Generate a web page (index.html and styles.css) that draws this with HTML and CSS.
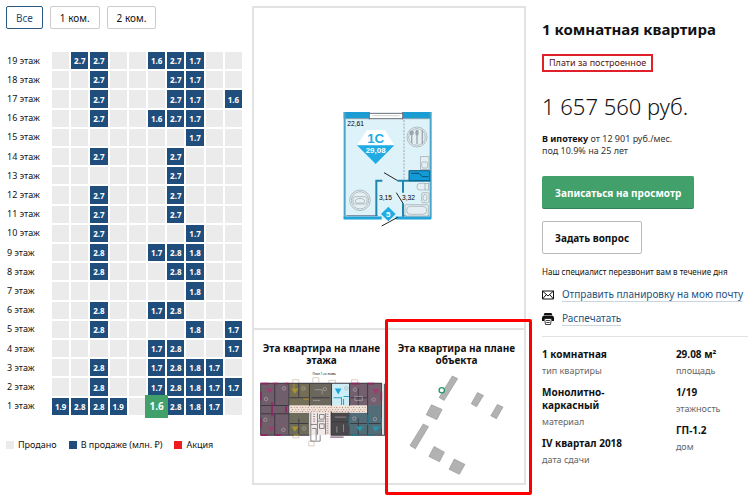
FILE: index.html
```html
<!DOCTYPE html>
<html lang="ru">
<head>
  <meta charset="UTF-8">
  <meta name="viewport" content="width=device-width, initial-scale=1.0">
  <title>1 комнатная квартира</title>
  <link rel="stylesheet" href="styles.css">
</head>
<body>
  <main class="page">
    <section class="floors">
      <div class="filters">
        <button type="button" class="filter active">Все</button>
        <button type="button" class="filter">1 ком.</button>
        <button type="button" class="filter">2 ком.</button>
      </div>
      <table class="chess">
        <tbody id="chess"></tbody>
      </table>
      <ul class="legend">
        <li class="sold">Продано</li>
        <li class="sale">В продаже (млн. ₽)</li>
        <li class="promo">Акция</li>
      </ul>
    </section>

    <section class="plans">
      <div class="plan-main">
        <svg class="flat" viewBox="0 0 360 390">
          <rect x="44" y="38" width="262" height="320" fill="#def2fa"/>
          <path d="M44 46H306" stroke="#1b9cd3" stroke-width="20"/>
          <path d="M52 56H298" stroke="#8fa3ad" stroke-width="3"/>
          <rect x="120" y="34" width="102" height="24" fill="#fff"/>
          <path d="M120 40H222M120 56H222M121 36V58M221 36V58" stroke="#66707a" stroke-width="3"/>
          <path d="M130 47H212" stroke="#bbb" stroke-width="2"/>
          <path d="M47 36V356M305 36V356" stroke="#4aa5c9" stroke-width="6"/>
          <path d="M44 354H158M200 354H306" stroke="#1fa5da" stroke-width="9"/>
          <path d="M52 347H146M222 347H300" stroke="#446" stroke-width="2"/>
          <path d="M142 348V242H160M222 350V310M222 278V242H304M206 242H222" fill="none" stroke="#2186ae" stroke-width="6"/>
          <path d="M225 60V240" stroke="#9aa7ad" stroke-width="3" stroke-dasharray="6 4"/>
          <path d="M240 242V212H302V242Z" fill="#139bd8" stroke="#115c80" stroke-width="3"/>
          <path d="M246 220H270L280 230H298" fill="none" stroke="#0d5173" stroke-width="3"/>
          <path d="M165 218L206 242M202 278L222 310M158 378L206 352" stroke="#222" stroke-width="3"/>
          <path d="M84 136L114 90H168L196 136Z" fill="#fff"/>
          <path d="M84 136H196L140 192Z" fill="#20ace3"/>
          <path d="M156 342L178 320L200 342L178 364Z" fill="#20ace3"/>
          <g fill="#e4eff3" stroke="#9aa6ab" stroke-width="2">
            <circle cx="264" cy="111" r="30"/>
            <circle cx="264" cy="111" r="25"/>
            <circle cx="93" cy="301" r="31"/>
            <circle cx="93" cy="301" r="26"/>
            <rect x="72" y="290" width="42" height="22" rx="6"/>
            <path d="M78 302Q93 288 108 302L104 309H82Z"/>
            <rect x="274" y="170" width="26" height="38"/>
            <rect x="278" y="186" width="18" height="18" rx="4"/>
            <rect x="278" y="278" width="22" height="30" rx="4"/>
            <ellipse cx="288" cy="293" rx="6" ry="10"/>
            <rect x="264" y="250" width="28" height="20" rx="9"/>
            <rect x="288" y="250" width="11" height="20"/>
            <rect x="228" y="314" width="70" height="34" rx="3"/>
            <rect x="233" y="319" width="60" height="24" rx="11"/>
          </g>
          <path d="M244 92V102Q248 108 252 102V92M248 92V130M264 106V132M280 90V132" fill="none" stroke="#9aa6ab" stroke-width="4"/>
          <ellipse cx="264" cy="98" rx="5" ry="9" fill="#9aa6ab"/>
          <g class="flat-label">
            <text x="55" y="78">22,61</text>
            <text x="150" y="300">3,15</text>
            <text x="219" y="300">3,32</text>
          </g>
          <text class="flat-type" x="140" y="128">1С</text>
          <text class="flat-area" x="140" y="159">29,08</text>
          <text class="flat-area" x="178" y="350">5</text>
        </svg>
      </div>
      <div class="plan-small">
        <h2>Эта квартира на плане этажа</h2>
        <svg class="floor-plan" viewBox="20 185 380 235">
          <text class="tiny" x="218" y="200">План 1-го этажа</text>
          <g fill="none" stroke="#c9b9ad" stroke-width="2">
            <path d="M124 224V214H142V224M184 222V208H202V222M232 224V216H252V224M300 224V214H318V224M124 380V388H142V380M172 398H188V412H172Z"/>
            <path d="M236 386H276" stroke="#a8899c" stroke-width="5"/>
          </g>
          <rect x="28" y="224" width="84" height="156" fill="#705e6a"/>
          <rect x="112" y="224" width="62" height="68" fill="#756e57"/>
          <rect x="174" y="224" width="66" height="68" fill="#6b675c"/>
          <rect x="240" y="224" width="54" height="68" fill="#ccecf6"/>
          <rect x="294" y="224" width="96" height="68" fill="#735f6d"/>
          <rect x="112" y="312" width="62" height="68" fill="#6e6d5b"/>
          <rect x="174" y="310" width="66" height="70" fill="#f0eaea"/>
          <rect x="240" y="310" width="52" height="70" fill="#4a484b"/>
          <rect x="292" y="312" width="98" height="68" fill="#536d78"/>
          <rect x="348" y="290" width="42" height="26" fill="#536d78"/>
          <rect x="112" y="291" width="236" height="22" fill="#f2e3d9"/>
          <path d="M118 297H344M122 304H344M118 309H340" stroke="#a98078" stroke-width="3" stroke-dasharray="3 7 2 5"/>
          <path d="M28 225H390M28 380H174M238 380H400M70 225V290M70 316V380M28 291H112M28 316H112M112 225V380M142 226V268M142 330V380M174 226V292M240 226V292M294 226V292M348 226V380M320 240V290M390 225V380M398 226V380M320 330V380M292 312V380M240 310V380M28 225V380M115 268H174M180 268H235M298 268H345M115 345H170M296 345H388M240 340H292" fill="none" stroke="#3d3a43" stroke-width="3"/>
          <path d="M28 226H52M64 226H80M100 226H112M29 250V276M29 330V356M62 282V324M104 294V312M28 380H48M70 380H88M300 226H324M346 226H368M389 250V276" fill="none" stroke="#8e2561" stroke-width="5"/>
          <path d="M300 380H322M348 380H366M293 325V350M349 320V350M389 330V360" stroke="#197d91" stroke-width="4"/>
          <path d="M128 226V252M126 380H144M156 272H172" stroke="#a18b35" stroke-width="4"/>
          <path d="M44 240L54 254L66 240ZM50 356L60 370L70 356ZM362 242L372 258L384 242Z" fill="#9e3c70"/>
          <path d="M120 240L130 256L142 240ZM120 354L130 370L142 354Z" fill="#a99232"/>
          <path d="M250 240L260 258L270 240Z" fill="#1aa8dd"/>
          <path d="M314 354L324 370L336 354ZM362 354L372 370L384 354Z" fill="#2797ab"/>
          <path d="M246 268H270V290M276 264H292M276 272V290" fill="none" stroke="#2b9fc7" stroke-width="3"/>
          <g fill="none" stroke="#b4a9b0" stroke-width="2">
            <circle cx="44" cy="272" r="5"/><circle cx="98" cy="240" r="5"/><circle cx="96" cy="364" r="5"/>
            <circle cx="42" cy="334" r="5"/><circle cx="156" cy="240" r="5"/><circle cx="220" cy="242" r="5"/>
            <circle cx="284" cy="240" r="5"/><circle cx="310" cy="244" r="5"/><circle cx="366" cy="274" r="5"/>
            <circle cx="308" cy="330" r="5"/><circle cx="370" cy="332" r="5"/><circle cx="158" cy="360" r="5"/>
            <path d="M190 244H212V258M184 276H206M310 264H332V276H310ZM250 326H284M256 354V372M276 348V370"/>
          </g>
          <path d="M178 312V398H206V380M198 314V378M198 338H218M204 318H218V332H204ZM204 346H218V360H204ZM222 314V378M238 312V380M178 348H196M182 360H194V396" fill="none" stroke="#55505a" stroke-width="2"/>
          <path d="M228 316V376M188 316V342" stroke="#b4897c" stroke-width="6" stroke-dasharray="3 4"/>
        </svg>
      </div>
      <div class="plan-small marked">
        <h2>Эта квартира на плане объекта</h2>
        <svg class="site-plan" viewBox="84 196 296 310">
          <g fill="#b2b2b2" stroke="#989898" stroke-width="2">
            <path d="M218 202L234 210L193 276L178 267Z"/>
            <path d="M294 252L312 261L291 295L275 286Z"/>
            <path d="M354 288L371 296L351 331L334 322Z"/>
            <path d="M155 289L187 303L171 334L139 319Z"/>
            <path d="M130 347L146 355L106 422L90 412Z"/>
            <path d="M163 415L194 432L179 461L147 445Z"/>
            <path d="M224 453L256 469L239 499L208 484Z"/>
          </g>
          <circle cx="186" cy="245" r="8" fill="#fff" stroke="#239765" stroke-width="4"/>
        </svg>
      </div>
    </section>

    <section class="info">
      <h1>1 комнатная квартира</h1>
      <span class="tag">Плати за построенное</span>
      <p class="price">1 657 560 руб.</p>
      <p class="mortgage"><b>В ипотеку</b> от 12 901 руб./мес.<br>под 10.9% на 25 лет</p>
      <button type="button" class="btn btn-green">Записаться на просмотр</button>
      <button type="button" class="btn">Задать вопрос</button>
      <p class="note">Наш специалист перезвонит вам в течение дня</p>
      <div class="action">
        <svg viewBox="0 0 12 12">
          <path d="M.5 2H11.5V10H.5ZM.5 2L6 7L11.5 2M.5 10L4.3 5.6M11.5 10L7.7 5.6" fill="none" stroke="#111"/>
        </svg>
        <a href="#">Отправить планировку на мою почту</a>
      </div>
      <div class="action">
        <svg viewBox="0 0 12 12">
          <path d="M2.500 0H9.500L10.500 2.500H1.500Z" fill="#111"/>
          <path d="M1.500 3H10.500Q12 3 12 4.500V8H10L9.500 6H2.500L2 8H0V4.500Q0 3 1.500 3Z" fill="#111"/>
          <path d="M2.500 5.500H9.500L8.500 11.500H3.500ZM4 7.500H8M4.300 9.500H7.700" fill="#fff" stroke="#111" stroke-width=".8"/>
        </svg>
        <a href="#">Распечатать</a>
      </div>
      <div class="specs">
        <dl>
          <dt>1 комнатная</dt>
          <dd>тип квартиры</dd>
          <dt>Монолитно-каркасный</dt>
          <dd>материал</dd>
          <dt>IV квартал 2018</dt>
          <dd>дата сдачи</dd>
        </dl>
        <dl>
          <dt>29.08 м²</dt>
          <dd>площадь</dd>
          <dt>1/19</dt>
          <dd>этажность</dd>
          <dt>ГП-1.2</dt>
          <dd>дом</dd>
        </dl>
      </div>
    </section>
  </main>

  <script>
    // top floor first, "-" is a sold flat
    const floors = [
      "- 2.7 2.7 - - 1.6 2.7 1.7 - -",
      "- - 2.7 - - - 2.7 1.7 - -",
      "- - 2.7 - - - 2.7 1.7 - 1.6",
      "- - 2.7 - - 1.6 2.7 1.7 - -",
      "- - - - - - - 1.7 - -",
      "- - 2.7 - - - 2.7 - - -",
      "- - - - - - 2.7 - - -",
      "- - 2.7 - - - 2.7 - - -",
      "- - 2.7 - - - 2.7 - - -",
      "- - 2.7 - - - - 1.7 - -",
      "- - 2.8 - - 1.7 2.8 1.8 - -",
      "- - 2.8 - - - 2.8 1.8 - -",
      "- - - - - - - 1.8 - -",
      "- - 2.8 - - 1.7 2.8 - - -",
      "- - 2.8 - - - - 1.8 - 1.7",
      "- - - - - 1.7 2.8 - - 1.7",
      "- - 2.8 - - 1.7 2.8 1.8 1.7 -",
      "- - 2.8 - - 1.7 2.8 1.8 1.7 1.7",
      "1.9 2.8 2.8 1.9 - 1.6 2.8 1.8 1.7 -"
    ];

    document.getElementById("chess").innerHTML = floors.map((row, i) => {
      const floor = floors.length - i;
      const cells = row.split(" ").map((price, n) => {
        if (price === "-") return "<td></td>";
        const current = floor === 1 && n === 5 ? ' class="current"' : "";
        return `<td><a href="#"${current}>${price}</a></td>`;
      });
      return `<tr><th scope="row">${floor} этаж</th>${cells.join("")}</tr>`;
    }).join("");
  </script>
</body>
</html>
```
FILE: styles.css
```css
* {
  box-sizing: border-box;
}

body {
  min-height: 100vh;
  margin: 0;
  padding: 6px 0 16px 6px;
  background: #fff;
  color: #111;
  font-family: "Noto Sans", "Open Sans", sans-serif;
  font-size: 10px;
}

h1, h2, p, ul, dl, dd {
  margin: 0;
  padding: 0;
}

button {
  font-family: inherit;
  cursor: pointer;
}

.page {
  display: grid;
  grid-template-columns: 236fr 274fr 212fr;
  gap: 10px;
  align-items: start;
}

/* floors */

.filters {
  display: flex;
  gap: 7px;
  margin-bottom: 23px;
}

.filter {
  height: 23px;
  padding: 0 9px;
  border: 1px solid #ccc;
  border-radius: 2px;
  background: #fff;
  color: #111;
  font-size: 10px;
}

.filter.active {
  border-color: #2a5885;
  color: #1f4e79;
}

.chess {
  display: block;
}

.chess tbody {
  display: grid;
  gap: 2px;
}

.chess tr {
  display: grid;
  grid-template-columns: 44px repeat(10, 1fr);
  gap: 2px;
}

.chess th {
  align-self: center;
  padding: 0 0 0 1px;
  font-size: 9px;
  line-height: 12px;
  font-weight: normal;
  text-align: left;
}

.chess td {
  position: relative;
  aspect-ratio: 1;
  padding: 0;
  background: #ebebeb;
}

.chess a {
  display: flex;
  align-items: center;
  justify-content: center;
  height: 100%;
  background: #1f4e7d;
  color: #fff;
  font-size: 8px;
  font-weight: bold;
  text-decoration: none;
}

.chess .current {
  position: absolute;
  inset: -3px;
  height: auto;
  z-index: 1;
  background: #42a06b;
  font-size: 10px;
}

.legend {
  display: flex;
  gap: 12px;
  margin-top: 24px;
  font-size: 9px;
  line-height: 12px;
  list-style: none;
}

.legend li {
  display: flex;
  align-items: center;
  gap: 4px;
  white-space: nowrap;
}

.legend li::before {
  content: "";
  width: 8px;
  height: 8px;
  background: #ebebeb;
}

.legend .sale::before {
  background: #1f4e7d;
}

.legend .promo::before {
  background: #ee1c1c;
}

/* plans */

.plans {
  display: grid;
  grid-template-columns: 1fr 1fr;
  border: 2px solid #e2e2e2;
}

.plan-main {
  grid-column: 1 / 3;
  display: flex;
  align-items: center;
  justify-content: center;
  height: 320px;
  padding-bottom: 6px;
}

.flat {
  width: 120px;
}

.flat-label {
  font: 20px "Liberation Sans", sans-serif;
}

.flat-type,
.flat-area {
  font: bold 24px "Liberation Sans", sans-serif;
  text-anchor: middle;
  fill: #fff;
}

.flat-type {
  font-size: 40px;
  fill: #20ace3;
}

.plan-small {
  position: relative;
  display: flex;
  flex-direction: column;
  align-items: center;
  height: 155px;
  padding-top: 12px;
  border-top: 2px solid #e2e2e2;
}

.plan-small h2 {
  max-width: 124px;
  font-size: 10px;
  line-height: 12px;
  text-align: center;
}

.floor-plan {
  width: 127px;
  margin-top: 4px;
}

.tiny {
  font-size: 9px;
  text-anchor: middle;
}

.site-plan {
  width: 98px;
  margin-top: 8px;
}

.marked::after {
  content: "";
  position: absolute;
  inset: -11px -8px -12px -4px;
  border: 3px solid #f00;
  border-radius: 2px;
}

/* info */

.info {
  padding: 12px 0 0 6px;
}

h1 {
  font-size: 15px;
  line-height: 22px;
}

.tag {
  display: inline-block;
  margin-top: 14px;
  padding: 0 5px;
  border: 2px solid #e0202b;
  color: #5a1414;
  font-size: 9px;
  line-height: 14px;
}

.price {
  margin-top: 18px;
  font-size: 22px;
  line-height: 32px;
  font-weight: 300;
}

.mortgage {
  margin-top: 11px;
  font-size: 9px;
  line-height: 12px;
  color: #333;
}

.mortgage b {
  color: #111;
}

.btn {
  display: block;
  height: 33px;
  margin-top: 12px;
  padding: 0 12px;
  border: 1px solid #bbb;
  border-radius: 2px;
  background: #fff;
  color: #111;
  font-size: 10px;
  font-weight: bold;
}

.btn-green {
  margin-top: 19px;
  border-color: #42a06b;
  border-bottom-color: #31825a;
  background: #42a06b;
  color: #fff;
}

.note {
  margin-top: 12px;
  font-size: 8px;
  line-height: 12px;
}

.action {
  display: flex;
  align-items: center;
  gap: 8px;
  margin-top: 9px;
}

.action svg {
  flex: none;
  width: 12px;
  height: 12px;
}

.action a {
  border-bottom: 1px solid #ccd5de;
  color: #24527f;
  font-size: 10px;
  line-height: 14px;
  text-decoration: none;
  white-space: nowrap;
}

.specs {
  display: grid;
  grid-template-columns: 13fr 7fr;
  margin-top: 10px;
  padding-top: 11px;
  border-top: 1px solid #e2e2e2;
}

.specs dt {
  max-width: 100px;
  font-size: 10px;
  line-height: 13px;
  font-weight: bold;
}

.specs dd {
  margin: 4px 0 9px;
  color: #666;
  font-size: 9px;
  line-height: 12px;
}
```
